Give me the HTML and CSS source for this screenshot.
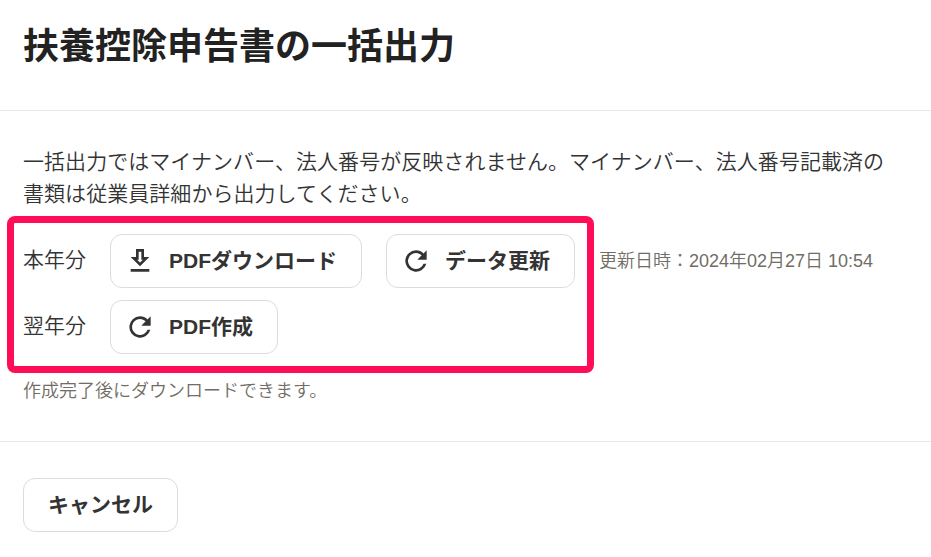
FILE: index.html
```html
<!DOCTYPE html>
<html lang="ja">
  <head>
    <meta charset="UTF-8" />
    <meta name="viewport" content="width=device-width, initial-scale=1.0" />
    <title>扶養控除申告書の一括出力</title>
    <link rel="stylesheet" href="styles.css">
  </head>
  <body>
    <header class="dialog-header">
      <h1>扶養控除申告書の一括出力</h1>
    </header>
    <main class="dialog-body">
      <p class="description">一括出力ではマイナンバー、法人番号が反映されません。マイナンバー、法人番号記載済の書類は従業員詳細から出力してください。</p>
      <div class="output-list">
        <div class="output-row">
          <span class="label">本年分</span>
          <button type="button" class="btn btn-icon">
            <svg class="icon" viewBox="0 0 24 24"><path d="M19 9h-4V3H9v6H5l7 7 7-7zm-8 2V5h2v6h1.17L12 13.17 9.83 11H11zm-6 7h14v2H5z" /></svg>
            PDFダウンロード
          </button>
          <button type="button" class="btn btn-icon">
            <svg class="icon" viewBox="0 0 24 24"><path d="M17.65 6.35A7.96 7.96 0 0 0 12 4a8 8 0 1 0 7.73 10h-2.08A6 6 0 1 1 12 6c1.66 0 3.14.69 4.22 1.78L13 11h7V4z" /></svg>
            データ更新
          </button>
          <span class="updated">更新日時：2024年02月27日 10:54</span>
        </div>
        <div class="output-row">
          <span class="label">翌年分</span>
          <button type="button" class="btn btn-icon">
            <svg class="icon" viewBox="0 0 24 24"><path d="M17.65 6.35A7.96 7.96 0 0 0 12 4a8 8 0 1 0 7.73 10h-2.08A6 6 0 1 1 12 6c1.66 0 3.14.69 4.22 1.78L13 11h7V4z" /></svg>
            PDF作成
          </button>
        </div>
        <div class="highlight"></div>
      </div>
      <p class="note">作成完了後にダウンロードできます。</p>
    </main>
    <footer class="dialog-footer">
      <button type="button" class="btn">キャンセル</button>
    </footer>
  </body>
</html>
```

FILE: styles.css
```css
* {
  box-sizing: border-box;
  margin: 0;
  padding: 0;
}
body {
  background-color: #fff;
  color: #333;
  font-family: 'Liberation Sans', 'Noto Sans CJK JP', sans-serif;
  font-size: 21px;
  font-weight: 350;
  line-height: 32px;
  overflow: hidden;
}
.dialog-header {
  height: 111px;
  padding: 20px 23px 0;
  border-bottom: 1px solid #e6e6e6;
}
h1 {
  color: #222;
  font-size: 36px;
  font-weight: bold;
  line-height: 54px;
}
.dialog-body {
  height: 331px;
  padding: 35px 36px 0 23px;
  border-bottom: 1px solid #e6e6e6;
}
.description {
  letter-spacing: 0.05px;
}
.output-list {
  position: relative;
  display: flex;
  flex-direction: column;
  gap: 12px;
  margin-top: 24px;
}
.output-row {
  display: flex;
  align-items: center;
  gap: 24px;
  white-space: nowrap;
}
.label {
  padding-bottom: 2px;
}
.btn {
  display: flex;
  align-items: center;
  height: 54px;
  padding: 0 24px 4px;
  background-color: #fff;
  border: 1px solid #dcdcdc;
  border-radius: 12px;
  color: #333;
  font-family: inherit;
  font-size: 21px;
  font-weight: bold;
  cursor: pointer;
}
.btn-icon {
  gap: 13px;
  padding-left: 13px;
}
.icon {
  width: 32px;
  height: 32px;
  margin-top: 4px;
  fill: #333;
}
.updated,
.note {
  color: #706d65;
  font-size: 18px;
}
.note {
  margin-top: 21px;
}
.highlight {
  position: absolute;
  top: -18px;
  left: -16px;
  width: 587px;
  height: 157px;
  border: 7px solid #ff0d57;
  border-radius: 8px;
  pointer-events: none;
}
.dialog-footer {
  padding: 36px 23px 0;
}
```
